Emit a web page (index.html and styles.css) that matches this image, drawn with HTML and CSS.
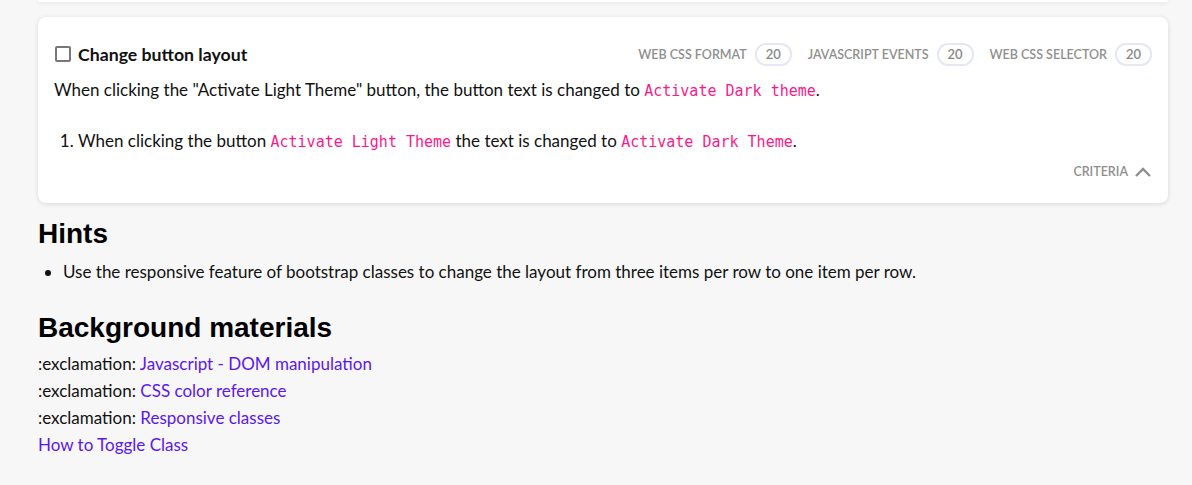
FILE: index.html
```html
<!DOCTYPE html>
<html>
<head>
<meta charset="utf-8">
<link rel="stylesheet" href="styles.css">
</head>
<body>
<div class="page">
  <div class="prev-card"></div>
  <div class="card">
    <div class="card-head">
      <label class="title"><span class="checkbox"></span>Change button layout</label>
      <div class="tags">
        <span class="tag">WEB CSS FORMAT <span class="pill">20</span></span>
        <span class="tag">JAVASCRIPT EVENTS <span class="pill">20</span></span>
        <span class="tag">WEB CSS SELECTOR <span class="pill">20</span></span>
      </div>
    </div>
    <p class="desc">When clicking the "Activate Light Theme" button, the button text is changed to <code>Activate Dark theme</code>.</p>
    <ol class="steps">
      <li>When clicking the button <code>Activate Light Theme</code> the text is changed to <code>Activate Dark Theme</code>.</li>
    </ol>
    <div class="criteria">CRITERIA
      <svg width="18" height="12" viewBox="0 0 18 12"><path d="M2 10 L9 3 L16 10" fill="none" stroke="#8f8f8f" stroke-width="2.4"/></svg>
    </div>
  </div>
  <h2 class="heading heading-hints">Hints</h2>
  <ul class="hints">
    <li>Use the responsive feature of bootstrap classes to change the layout from three items per row to one item per row.</li>
  </ul>
  <h2 class="heading heading-materials">Background materials</h2>
  <div class="materials">
    <div>:exclamation: <a href="#">Javascript - DOM manipulation</a></div>
    <div>:exclamation: <a href="#">CSS color reference</a></div>
    <div>:exclamation: <a href="#">Responsive classes</a></div>
    <div><a href="#">How to Toggle Class</a></div>
  </div>
</div>
</body>
</html>
```
FILE: styles.css
```css
html, body {
  margin: 0;
  padding: 0;
  background: #f7f7f7;
}
body {
  font-family: "Lato", "Noto Sans", sans-serif;
  font-size: 17px;
  color: #111;
}
.page {
  padding: 0 24px 0 38px;
}
.prev-card {
  height: 2px;
  background: #fff;
  border-radius: 0 0 8px 8px;
  box-shadow: 0 1px 4px rgba(0,0,0,0.12);
}
.card {
  margin-top: 15px;
  background: #fff;
  border-radius: 8px;
  box-shadow: 0 1px 5px rgba(0,0,0,0.13);
  padding: 24px 16px 24px 16px;
}
.card-head {
  display: flex;
  justify-content: space-between;
  align-items: center;
  height: 26px;
}
.title {
  display: flex;
  align-items: center;
  font-weight: 700;
  font-size: 17.7px;
}
.checkbox {
  width: 12px;
  height: 12px;
  border: 2px solid #777;
  border-radius: 2px;
  margin: 0 7px 0 1px;
}
.tags {
  display: flex;
  gap: 16px;
}
.tag {
  display: flex;
  align-items: center;
  gap: 8px;
  font-size: 12.5px;
  font-weight: 600;
  color: #8f8f8f;
}
.pill {
  display: inline-flex;
  align-items: center;
  justify-content: center;
  width: 33px;
  height: 19px;
  border: 2px solid #e6e6f5;
  border-radius: 11px;
  color: #888;
  font-size: 13px;
}
.desc {
  margin: 10px 0 0 0;
  line-height: 26px;
}
code {
  font-family: "DejaVu Sans Mono", monospace;
  font-size: 15px;
  color: #fa1a8a;
}
.steps {
  margin: 24px 0 0 0;
  padding-left: 24px;
  line-height: 26px;
}
.criteria {
  display: flex;
  justify-content: flex-end;
  align-items: center;
  gap: 6px;
  margin-top: 9px;
  font-size: 12.5px;
  font-weight: 600;
  color: #8f8f8f;
}
.heading {
  font-family: "Liberation Sans", Arial, sans-serif;
  font-weight: 700;
  font-size: 28px;
  margin: 15px 0 9px 0;
  color: #000;
}
.heading-materials {
  margin-bottom: 6px;
}
.hints {
  margin: 0 0 27px 0;
  padding-left: 25px;
  line-height: 26px;
}
.materials {
  line-height: 27px;
}
a {
  color: #5c16f0;
  text-decoration: none;
}
```
